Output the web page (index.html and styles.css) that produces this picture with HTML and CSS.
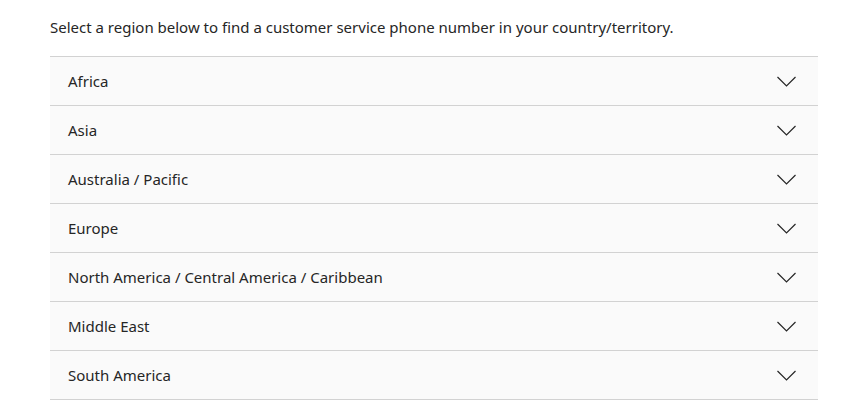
FILE: index.html
```html
<!DOCTYPE html>
<html lang="en">
<head>
<meta charset="utf-8">
<link rel="stylesheet" href="styles.css">
</head>
<body>
<main class="page">
  <p class="intro">Select a region below to find a customer service phone number in your country/territory.</p>
  <div class="accordion">
    <div class="row"><span>Africa</span><svg class="chev" width="19" height="11" viewBox="0 0 19 11"><path d="M0.5 1 L9.5 10 L18.5 1" fill="none" stroke="#262626" stroke-width="1.2"/></svg></div>
    <div class="row"><span>Asia</span><svg class="chev" width="19" height="11" viewBox="0 0 19 11"><path d="M0.5 1 L9.5 10 L18.5 1" fill="none" stroke="#262626" stroke-width="1.2"/></svg></div>
    <div class="row"><span>Australia / Pacific</span><svg class="chev" width="19" height="11" viewBox="0 0 19 11"><path d="M0.5 1 L9.5 10 L18.5 1" fill="none" stroke="#262626" stroke-width="1.2"/></svg></div>
    <div class="row"><span>Europe</span><svg class="chev" width="19" height="11" viewBox="0 0 19 11"><path d="M0.5 1 L9.5 10 L18.5 1" fill="none" stroke="#262626" stroke-width="1.2"/></svg></div>
    <div class="row"><span>North America / Central America / Caribbean</span><svg class="chev" width="19" height="11" viewBox="0 0 19 11"><path d="M0.5 1 L9.5 10 L18.5 1" fill="none" stroke="#262626" stroke-width="1.2"/></svg></div>
    <div class="row"><span>Middle East</span><svg class="chev" width="19" height="11" viewBox="0 0 19 11"><path d="M0.5 1 L9.5 10 L18.5 1" fill="none" stroke="#262626" stroke-width="1.2"/></svg></div>
    <div class="row"><span>South America</span><svg class="chev" width="19" height="11" viewBox="0 0 19 11"><path d="M0.5 1 L9.5 10 L18.5 1" fill="none" stroke="#262626" stroke-width="1.2"/></svg></div>
  </div>
</main>
</body>
</html>
```

FILE: styles.css
```css
html, body {
  margin: 0;
  padding: 0;
  background: #ffffff;
}
body {
  font-family: "Noto Sans", "Open Sans", sans-serif;
  color: #262626;
}
.page {
  width: 768px;
  margin-left: 50px;
  padding-top: 15px;
}
.intro {
  margin: 0 0 17px 0;
  font-size: 15px;
  line-height: 24px;
}
.accordion {
  border-top: 1px solid #d2d2d2;
}
.row {
  display: flex;
  align-items: center;
  justify-content: space-between;
  height: 48px;
  padding: 0 22px 0 18px;
  background: #fafafa;
  border-bottom: 1px solid #d2d2d2;
  font-size: 15px;
}
.chev {
  display: block;
}
```
